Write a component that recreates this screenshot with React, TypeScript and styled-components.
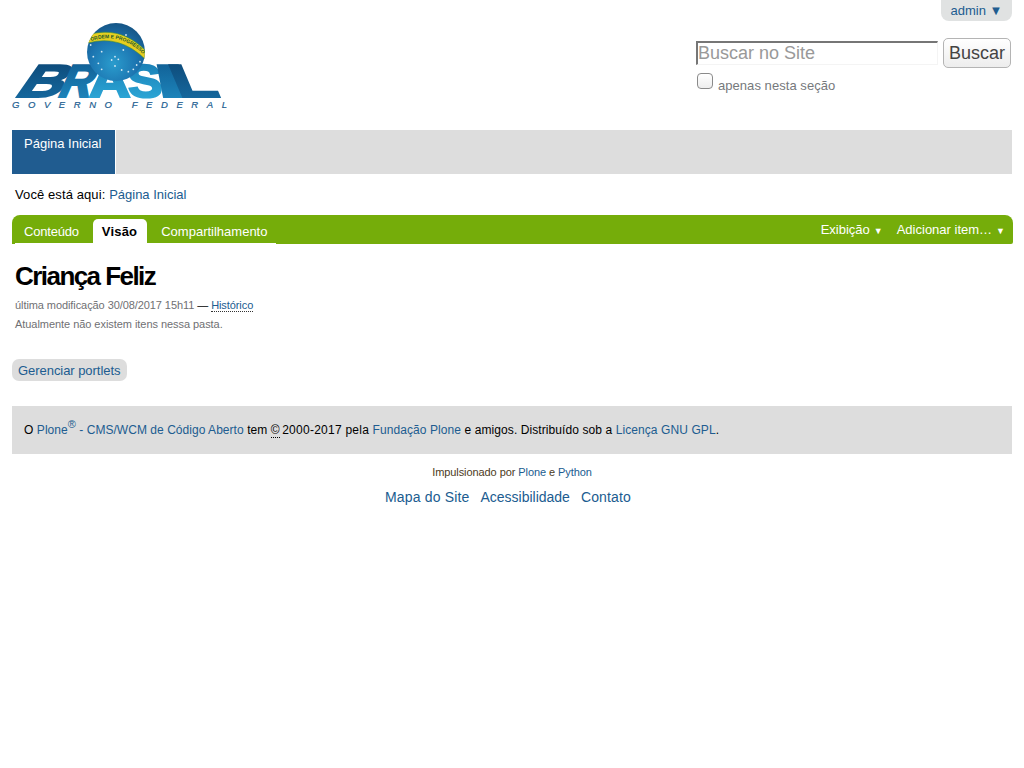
import React from 'react';
import styled, { createGlobalStyle } from 'styled-components';

const GlobalStyle = createGlobalStyle`
    html, body {
        margin: 0;
        padding: 0;
        background: #fff;
    }
    body {
        font-family: "Liberation Sans", Arial, sans-serif;
        font-size: 13px;
        color: #000;
    }
    a {
        color: #205c90;
        text-decoration: none;
    }
`;

const Page = styled.div`
    padding: 0 12px;
    width: 1000px;
`;

const PersonalBar = styled.div`
    display: flex;
    justify-content: flex-end;
    height: 21px;
`;

const UserMenu = styled.a`
    background: #e0e2e2;
    border-radius: 0 0 8px 8px;
    width: 71px;
    text-align: center;
    line-height: 21px;
    font-size: 13px;
`;

const Header = styled.div`
    display: flex;
    justify-content: space-between;
    height: 109px;
`;

const LogoBox = styled.div`
    padding-top: 1px;
    line-height: 0;
`;

const SearchBox = styled.form`
    width: 315px;
    padding-top: 17px;
    margin: 0 1px 0 0;
`;

const SearchRow = styled.div`
    display: flex;
    justify-content: space-between;
    align-items: flex-start;
`;

const SearchInput = styled.input`
    box-sizing: border-box;
    width: 242px;
    height: 24px;
    margin-top: 3px;
    padding: 0;
    border-style: solid;
    border-width: 2px 1px 1px 2px;
    border-color: #767676 #f4f4f4 #f4f4f4 #767676;
    font-family: "Liberation Sans", Arial, sans-serif;
    font-size: 18px;
    outline: none;

    &::placeholder {
        color: #999;
        opacity: 1;
    }
`;

const SearchButton = styled.button`
    box-sizing: border-box;
    width: 68px;
    height: 30px;
    padding: 0;
    border: 1px solid #b4b4b4;
    border-radius: 5px;
    background: linear-gradient(#fff, #ededed);
    color: #444;
    font-family: "Liberation Sans", Arial, sans-serif;
    font-size: 18px;
`;

const SectionOption = styled.label`
    display: flex;
    align-items: flex-start;
    margin-top: 5px;
    color: #76797c;
    font-size: 13px;
`;

const CheckBox = styled.span`
    display: block;
    box-sizing: border-box;
    width: 16px;
    height: 16px;
    margin: 0 5px 0 1px;
    border: 1px solid #8a8a8a;
    border-radius: 4px;
    background: linear-gradient(#fff, #eee);
`;

const SectionLabel = styled.span`
    padding-top: 5px;
    line-height: 15px;
    letter-spacing: 0.05px;
`;

const GlobalNav = styled.nav`
    display: flex;
    height: 44px;
    background: #ddd;
`;

const NavTab = styled.a`
    box-sizing: border-box;
    width: 104px;
    padding: 6px 0 0 12px;
    border-right: 1px solid #fff;
    background: #205c90;
    color: #fff;
    line-height: 15px;
`;

const Breadcrumbs = styled.div`
    height: 41px;
    padding: 13px 0 0 3px;
    box-sizing: border-box;
    line-height: 15px;
    letter-spacing: 0.1px;

    a {
        letter-spacing: 0;
    }
`;

const EditBar = styled.div`
    display: flex;
    justify-content: space-between;
    width: 1001px;
    height: 29px;
    border-radius: 8px 8px 2px 0;
    background: #75ad0a;
`;

const EditTabs = styled.div`
    display: flex;
    align-items: flex-end;
    box-sizing: border-box;
    margin-left: 3px;
    border-bottom: 1px solid #fff;
`;

const EditTab = styled.a<{ $active?: boolean }>`
    box-sizing: border-box;
    height: ${(p) => (p.$active ? '24px' : '28px')};
    padding: ${(p) => (p.$active ? '5px 10px 0 9px' : '9px 9px 0 14px')};
    border-radius: ${(p) => (p.$active ? '5px 5px 0 0' : '0')};
    background: ${(p) => (p.$active ? '#fff' : 'transparent')};
    color: ${(p) => (p.$active ? '#000' : '#fff')};
    font-weight: ${(p) => (p.$active ? 'bold' : 'normal')};
    letter-spacing: ${(p) => (p.$active ? '0.2px' : '0')};
    line-height: 15px;
`;

const FirstTab = styled(EditTab)`
    padding: 9px 14px 0 9px;
    letter-spacing: -0.2px;
`;

const EditMenus = styled.div`
    display: flex;
    gap: 14px;
    padding: 7px 8px 0 0;
`;

const EditMenu = styled.a`
    color: #fff;
    line-height: 15px;

    span {
        margin-left: 4px;
        font-size: 9px;
    }
`;

const Content = styled.main`
    padding: 0 3px;
    height: 115px;
`;

const Title = styled.h1`
    margin: 0;
    padding-top: 16px;
    font-size: 26px;
    line-height: 32px;
    font-weight: bold;
    letter-spacing: -1.55px;
`;

const Byline = styled.div`
    margin-top: 6px;
    color: #6f7073;
    font-size: 11px;
    line-height: 14px;
    letter-spacing: -0.08px;

    a {
        color: #205c90;
        border-bottom: 1px dotted #333;
    }

    em {
        color: #000;
        font-style: normal;
    }
`;

const Description = styled.p`
    margin: 5px 0 0;
    color: #6f7073;
    font-size: 11px;
    line-height: 14px;
    letter-spacing: -0.05px;
`;

const ManageRow = styled.div`
    height: 47px;
`;

const ManageLink = styled.a`
    display: inline-block;
    height: 22px;
    padding: 0 6.5px 0 6px;
    border-radius: 7px;
    background: #ddd;
    line-height: 23px;
    letter-spacing: -0.05px;
`;

const Colophon = styled.div`
    height: 48px;
    padding: 0 12px;
    background: #ddd;
    font-size: 12px;
    line-height: 48px;
    letter-spacing: 0.085px;

    sup {
        font-size: 11px;
        line-height: 0;
        color: #205c90;
        vertical-align: 6px;
    }

    abbr {
        border-bottom: 1px dotted #000;
        line-height: 13px;
        display: inline-block;
        margin-right: -1px;
    }
`;

const PloneLink = styled.a`
    letter-spacing: 0.04px;
`;

const Years = styled.span`
    letter-spacing: 0.25px;
`;

const PoweredBy = styled.div`
    margin-top: 11px;
    text-align: center;
    color: #4c3a1b;
    font-size: 11px;
    line-height: 14px;
    letter-spacing: -0.08px;
`;

const SiteActions = styled.div`
    display: flex;
    justify-content: center;
    gap: 11px;
    margin-top: 9px;
    padding-right: 8px;
    font-size: 14px;
    line-height: 18px;
`;

const SiteAction = styled.a<{ $spacing?: number }>`
    letter-spacing: ${(p) => p.$spacing ?? 0}px;
`;

const STARS = [
    [305, 125], [345, 140], [335, 150], [355, 148], [280, 140], [295, 160], [345, 168], [305, 178],
    [370, 120], [420, 155], [410, 165], [365, 180], [385, 185], [400, 178], [378, 75], [272, 105],
];

const WORD = [
    { ch: 'B', x: 1, skew: -35, sx: 1.36, id: 'wordEdge' },
    { ch: 'R', x: 44, skew: -24, sx: 0.98, id: 'wordMid' },
    { ch: 'A', x: 77, skew: 0, sx: 1.25, id: 'wordCenter' },
    { ch: 'S', x: 117, skew: 5, sx: 1.12, id: 'wordCenter' },
    { ch: 'I', x: 146, skew: 11, sx: 2.5, id: 'wordMid' },
    { ch: 'L', x: 167, skew: 23, sx: 1.5, id: 'wordEdge' },
];

const BrasilLogo = () => (
    <svg width="216" height="87" viewBox="0 0 216 87">
        <defs>
            <radialGradient id="globe" cx="0.45" cy="0.7" r="0.75">
                <stop offset="0" stopColor="#2a9ccd" />
                <stop offset="0.55" stopColor="#1c74b0" />
                <stop offset="1" stopColor="#14507f" />
            </radialGradient>
            <linearGradient id="wordEdge" x1="0" y1="0" x2="0" y2="1">
                <stop offset="0" stopColor="#0c4674" />
                <stop offset="1" stopColor="#176ea5" />
            </linearGradient>
            <linearGradient id="wordMid" x1="0" y1="0" x2="0" y2="1">
                <stop offset="0" stopColor="#0f5a90" />
                <stop offset="1" stopColor="#1f8cc2" />
            </linearGradient>
            <linearGradient id="wordCenter" x1="0" y1="0" x2="0" y2="1">
                <stop offset="0" stopColor="#1678b0" />
                <stop offset="1" stopColor="#30aedc" />
            </linearGradient>
            <clipPath id="globeClip">
                <circle cx="104" cy="30" r="29" />
            </clipPath>
            <path id="bandLine" d="M76 20 Q108 8 133 34" />
        </defs>
        <g fontFamily="Liberation Sans, Arial, sans-serif" fontWeight="bold" fontSize="46">
            {WORD.map((l) => (
                <text
                    key={l.ch}
                    transform={`translate(${l.x} 75) skewX(${l.skew}) scale(${l.sx} 1)`}
                    fill={`url(#${l.id})`}
                    stroke={`url(#${l.id})`}
                    strokeWidth="2.2"
                >
                    {l.ch}
                </text>
            ))}
        </g>
        <circle cx="104" cy="30" r="29" fill="url(#globe)" />
        <g clipPath="url(#globeClip)">
            <path d="M75 13 Q108 3 133 28 L134 38 Q108 12 76 21 Z" fill="#e6cf20" stroke="#3f8f3a" strokeWidth="0.6" />
            <text fontFamily="Liberation Sans, Arial, sans-serif" fontWeight="bold" fontSize="5" fill="#1f5a2a">
                <textPath href="#bandLine" startOffset="3">ORDEM E PROGRESSO</textPath>
            </text>
        </g>
        <g fill="#d4e8f3">
            {STARS.map(([x, y]) => (
                <circle key={`${x}-${y}`} cx={x / 3 - 12} cy={y / 3 - 12} r="0.9" />
            ))}
        </g>
        <text
            x="0"
            y="85.5"
            textLength="215"
            lengthAdjust="spacing"
            fontFamily="Liberation Sans, Arial, sans-serif"
            fontStyle="italic"
            fontSize="9.5"
            fill="#1a5c8f"
            stroke="#1a5c8f"
            strokeWidth="0.2"
        >
            GOVERNO FEDERAL
        </text>
    </svg>
);

export default function App() {
    return (
        <Page>
            <GlobalStyle />
            <PersonalBar>
                <UserMenu href="#">admin ▼</UserMenu>
            </PersonalBar>
            <Header>
                <LogoBox>
                    <BrasilLogo />
                </LogoBox>
                <SearchBox>
                    <SearchRow>
                        <SearchInput placeholder="Buscar no Site" />
                        <SearchButton type="button">Buscar</SearchButton>
                    </SearchRow>
                    <SectionOption>
                        <CheckBox />
                        <SectionLabel>apenas nesta seção</SectionLabel>
                    </SectionOption>
                </SearchBox>
            </Header>
            <GlobalNav>
                <NavTab href="#">Página Inicial</NavTab>
            </GlobalNav>
            <Breadcrumbs>
                Você está aqui: <a href="#">Página Inicial</a>
            </Breadcrumbs>
            <EditBar>
                <EditTabs>
                    <FirstTab href="#">Conteúdo</FirstTab>
                    <EditTab href="#" $active>Visão</EditTab>
                    <EditTab href="#">Compartilhamento</EditTab>
                </EditTabs>
                <EditMenus>
                    <EditMenu href="#">Exibição<span>▼</span></EditMenu>
                    <EditMenu href="#">Adicionar item…<span>▼</span></EditMenu>
                </EditMenus>
            </EditBar>
            <Content>
                <Title>Criança Feliz</Title>
                <Byline>
                    última modificação 30/08/2017 15h11 <em>—</em> <a href="#">Histórico</a>
                </Byline>
                <Description>Atualmente não existem itens nessa pasta.</Description>
            </Content>
            <ManageRow>
                <ManageLink href="#">Gerenciar portlets</ManageLink>
            </ManageRow>
            <Colophon>
                O <PloneLink href="#">Plone<sup>®</sup> - CMS/WCM de Código Aberto</PloneLink> tem <abbr>©</abbr>{' '}
                <Years>2000-2017 pela</Years> <a href="#">Fundação Plone</a> e amigos. Distribuído sob a{' '}
                <a href="#">Licença GNU GPL</a>.
            </Colophon>
            <PoweredBy>
                Impulsionado por <a href="#">Plone</a> e <a href="#">Python</a>
            </PoweredBy>
            <SiteActions>
                <SiteAction href="#" $spacing={0.16}>Mapa do Site</SiteAction>
                <SiteAction href="#">Acessibilidade</SiteAction>
                <SiteAction href="#" $spacing={0.15}>Contato</SiteAction>
            </SiteActions>
        </Page>
    );
}
